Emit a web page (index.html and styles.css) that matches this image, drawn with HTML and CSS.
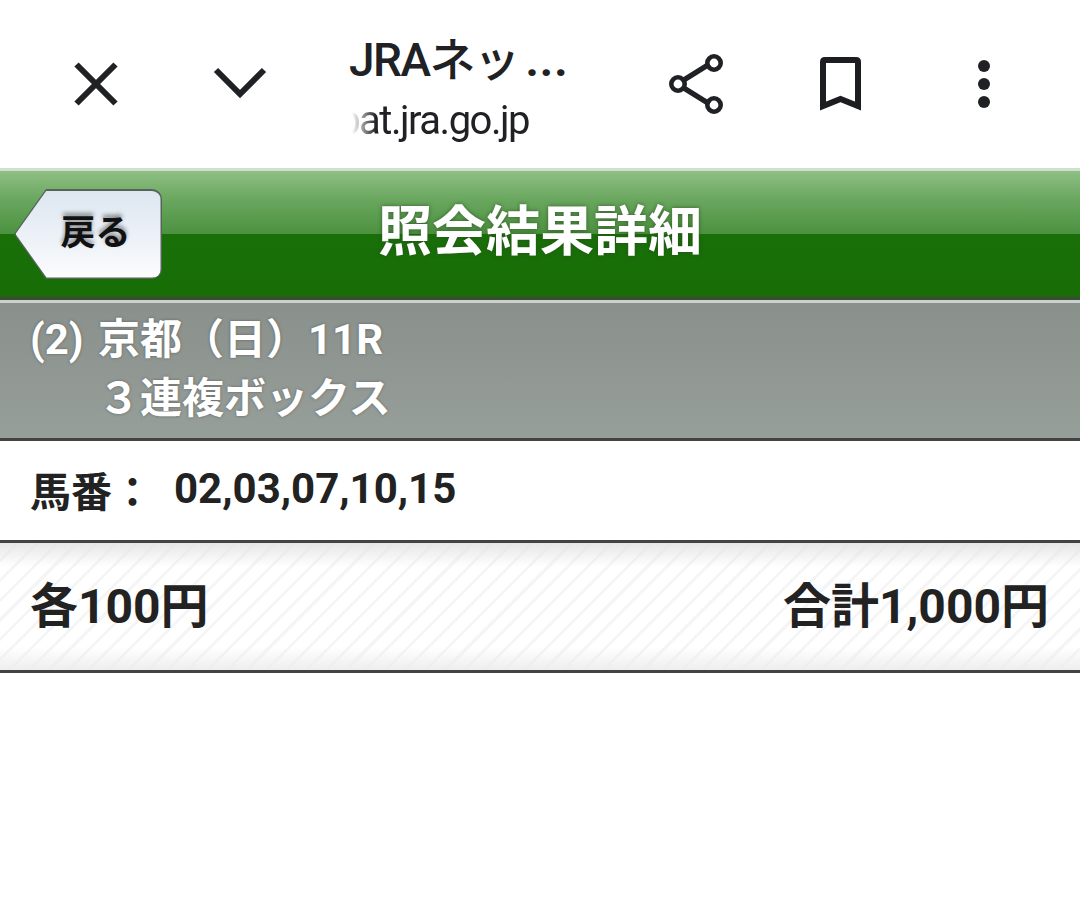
FILE: index.html
```html
<!DOCTYPE html>
<html lang="ja">
<head>
<meta charset="utf-8">
<title>照会結果詳細</title>
<link rel="stylesheet" href="styles.css">
</head>
<body>
<div class="toolbar">
  <div class="tool">
    <svg class="icon" width="72" height="72" viewBox="0 0 72 72"><path d="M16.500 16.500 L55.500 55.500 M55.500 16.500 L16.500 55.500" fill="none" stroke="#202124" stroke-width="6"/></svg>
  </div>
  <div class="tool">
    <svg class="icon" width="72" height="72" viewBox="0 0 72 72"><path d="M12 22 L36 46 L60 22" fill="none" stroke="#202124" stroke-width="6"/></svg>
  </div>
  <div class="titlebox">
    <div class="page-title">JRAネッ<span class="dots">...</span></div>
    <div class="url"><span>www.ipat.jra.go.jp</span></div>
  </div>
  <div class="tool">
    <svg class="icon" width="72" height="72" viewBox="-4 0 72 72"><path d="M19 32.500 L45.500 16 M19 39.500 L45.500 56" fill="none" stroke="#202124" stroke-width="5.500"/><circle cx="14" cy="36" r="6.700" fill="none" stroke="#202124" stroke-width="4.600"/><circle cx="50" cy="15" r="6.700" fill="none" stroke="#202124" stroke-width="4.600"/><circle cx="50" cy="57" r="6.700" fill="none" stroke="#202124" stroke-width="4.600"/></svg>
  </div>
  <div class="tool">
    <svg class="icon" width="72" height="72" viewBox="0 0 72 72"><path d="M19 58 V14 Q19 12 21 12 H52 Q54 12 54 14 V58 L36.500 51 Z" fill="none" stroke="#1c1d21" stroke-width="6" stroke-miterlimit="3"/></svg>
  </div>
  <div class="tool">
    <svg class="icon" width="72" height="72" viewBox="0 0 72 72"><circle cx="36" cy="18" r="6" fill="#202124"/><circle cx="36" cy="36" r="6" fill="#202124"/><circle cx="36" cy="54" r="6" fill="#202124"/></svg>
  </div>
</div>

<header class="header">
  <a class="back"><span class="back-face">戻る</span></a>
  <h1 class="header-title">照会結果詳細</h1>
</header>

<section class="race">
  <div class="race-line">(2) 京都（日）11R</div>
  <div class="race-line race-type">３連複ボックス</div>
</section>

<section class="numbers">
  <span class="numbers-label">馬番：</span>
  <span class="numbers-value">02,03,07,10,15</span>
</section>

<section class="totals">
  <span>各100円</span>
  <span>合計1,000円</span>
</section>
</body>
</html>
```

FILE: styles.css
```css
* { box-sizing: border-box; }
html, body { margin: 0; padding: 0; background: #fff; }
body {
  width: 1080px;
  height: 902px;
  overflow: hidden;
  font-family: Roboto, "Noto Sans CJK JP", sans-serif;
  color: #222;
}

.toolbar {
  display: flex;
  height: 168px;
  padding: 0 24px;
  background: #fff;
}
.tool {
  width: 144px;
  display: flex;
  align-items: center;
  justify-content: center;
}
.icon { display: block; }
.titlebox {
  width: 312px;
  padding-left: 37px;
  display: flex;
  flex-direction: column;
  justify-content: center;
  padding-top: 18px;
}
.page-title {
  font-size: 46px;
  line-height: 58px;
  font-weight: 500;
  letter-spacing: -1.500px;
  color: #202124;
  margin-top: -8px;
  white-space: nowrap;
}
.dots {
  margin-left: 7px;
  letter-spacing: 1px;
  font-weight: 700;
}
.url {
  width: 180px;
  height: 54px;
  margin-top: 5px;
  display: flex;
  justify-content: flex-end;
  overflow: hidden;
  font-size: 40px;
  letter-spacing: -1.500px;
  line-height: 54px;
  color: #202124;
  white-space: nowrap;
  -webkit-mask-image: linear-gradient(90deg, transparent 3px, #000 27px);
  mask-image: linear-gradient(90deg, transparent 3px, #000 27px);
}
.url span { flex: none; }

.header {
  position: relative;
  height: 135px;
  border-top: 3px solid #cfe0cf;
  border-bottom: 3px solid #c9d2cc;
  background: linear-gradient(180deg, #8fbf85 0, #6aa75f 28px, #4c9240 63px, #197009 63px, #176c06 100%);
  display: flex;
  align-items: center;
  justify-content: center;
  box-shadow: inset 0 -3px 0 #3c4a3a;
}
.header-title {
  margin: 0;
  font-family: "Noto Sans CJK JP", sans-serif;
  font-size: 54px;
  line-height: 70px;
  font-weight: 700;
  color: #fff;
  text-shadow: 0 0 4px rgba(40, 70, 30, .7);
  margin-top: -15px;
}
.back {
  position: absolute;
  left: 14px;
  top: 18px;
  width: 148px;
  height: 90px;
  background: #56635a;
  border-radius: 0 10px 10px 0;
  clip-path: polygon(32px 0, 100% 0, 100% 100%, 32px 100%, 0 50%);
}
.back-face {
  position: absolute;
  inset: 1.500px;
  display: flex;
  align-items: center;
  justify-content: center;
  padding: 0 0 9px 15px;
  background: linear-gradient(180deg, #dde6f0 0, #f0f4f9 65%, #fbfcfe 100%);
  border-radius: 0 9px 9px 0;
  clip-path: polygon(31px 0, 100% 0, 100% 100%, 31px 100%, 0 50%);
  font-family: "Noto Sans CJK JP", sans-serif;
  font-size: 35px;
  font-weight: 700;
  color: #111;
  text-shadow: 0 -3px 4px rgba(0, 0, 0, .45);
}

.race {
  height: 138px;
  padding: 8px 0 0 30px;
  border-bottom: 3px solid #434343;
  background: linear-gradient(180deg, #8a908b 0, #979f9a 100%);
  font-weight: 700;
  color: #fff;
  text-shadow: 0 0 3px rgba(60, 60, 60, .6);
}
.race-line {
  height: 58px;
  line-height: 58px;
  white-space: nowrap;
  font-family: Roboto, "Noto Sans CJK JP", sans-serif;
  font-size: 42px;
  word-spacing: 4px;
}
.race-type { padding-left: 68px; margin-top: 1px; }

.numbers {
  height: 102px;
  padding: 0 0 4px 30px;
  border-bottom: 3px solid #434343;
  display: flex;
  align-items: center;
  font-weight: 700;
  color: #222;
  background: #fff;
}
.numbers-label {
  font-family: "Noto Sans CJK JP", sans-serif;
  font-size: 41px;
  width: 144px;
  white-space: nowrap;
}
.numbers-value { font-size: 42px; }

.totals {
  height: 130px;
  padding: 0 31px 10px 30px;
  border-bottom: 3px solid #434343;
  display: flex;
  align-items: center;
  justify-content: space-between;
  font-size: 48px;
  font-weight: 700;
  color: #222;
  background:
    linear-gradient(180deg, rgba(228, 228, 228, .9) 0, rgba(255, 255, 255, 0) 24px, rgba(255, 255, 255, 0) 104px, rgba(236, 236, 236, .9) 100%),
    repeating-linear-gradient(135deg, #fff 0, #fff 11px, #f5f5f5 11px, #f5f5f5 14px);
}
```
